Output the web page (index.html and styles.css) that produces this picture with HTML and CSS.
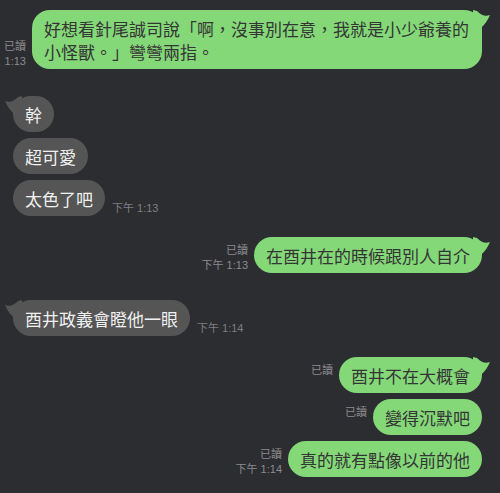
FILE: index.html
```html
<!DOCTYPE html>
<html lang="zh-Hant">
<head>
    <meta charset="UTF-8">
    <meta name="viewport" content="width=device-width, initial-scale=1.0">
    <title>聊天</title>
    <link rel="stylesheet" href="styles.css">
</head>
<body>
    <div class="chat">
        <div class="row out head">
            <div class="meta"><span>已讀</span><span>1:13</span></div>
            <div class="bubble">好想看針尾誠司說「啊，沒事別在意，我就是小少爺養的小怪獸。」彎彎兩指。<svg class="tail" viewBox="0 0 18 18"><path d="M1 5 C6 7 10 5 14 1 L18 0 L18 18 L10 18 C6 14 3 10 1 5 Z"/></svg></div>
        </div>

        <div class="row in head">
            <div class="bubble">幹<svg class="tail" viewBox="0 0 18 18"><path d="M1 5 C6 7 10 5 14 1 L18 0 L18 18 L10 18 C6 14 3 10 1 5 Z"/></svg></div>
        </div>
        <div class="row in">
            <div class="bubble">超可愛</div>
        </div>
        <div class="row in">
            <div class="bubble">太色了吧</div>
            <div class="time">下午 1:13</div>
        </div>

        <div class="row out head">
            <div class="meta"><span>已讀</span><span>下午 1:13</span></div>
            <div class="bubble">在酉井在的時候跟別人自介<svg class="tail" viewBox="0 0 18 18"><path d="M1 5 C6 7 10 5 14 1 L18 0 L18 18 L10 18 C6 14 3 10 1 5 Z"/></svg></div>
        </div>

        <div class="row in head">
            <div class="bubble">酉井政義會瞪他一眼<svg class="tail" viewBox="0 0 18 18"><path d="M1 5 C6 7 10 5 14 1 L18 0 L18 18 L10 18 C6 14 3 10 1 5 Z"/></svg></div>
            <div class="time">下午 1:14</div>
        </div>

        <div class="row out head">
            <div class="meta"><span>已讀</span></div>
            <div class="bubble">酉井不在大概會<svg class="tail" viewBox="0 0 18 18"><path d="M1 5 C6 7 10 5 14 1 L18 0 L18 18 L10 18 C6 14 3 10 1 5 Z"/></svg></div>
        </div>
        <div class="row out">
            <div class="meta"><span>已讀</span></div>
            <div class="bubble">變得沉默吧</div>
        </div>
        <div class="row out">
            <div class="meta"><span>已讀</span><span>下午 1:14</span></div>
            <div class="bubble">真的就有點像以前的他</div>
        </div>
    </div>
</body>
</html>
```

FILE: styles.css
```css
body {
    margin: 0;
    background-color: #2c2d30;
    font-family: "Noto Sans CJK TC", sans-serif;
}

.chat {
    display: flex;
    flex-direction: column;
    padding: 10px 18px 10px 4px;
}

.row {
    display: flex;
    align-items: flex-end;
    margin-top: 6px;
}

.row.in {
    justify-content: flex-start;
    padding-left: 9px;
}

.row.out {
    justify-content: flex-end;
}

.row.in.head {
    margin-top: 27px;
}

.row.out.head {
    margin-top: 21px;
}

.chat .row.head:first-child {
    margin-top: 0;
}

.bubble {
    position: relative;
    max-width: 450px;
    padding: 7px 12px 6px;
    border-radius: 18px;
    font-size: 17px;
    line-height: 23px;
    box-sizing: border-box;
}

.in .bubble {
    background-color: #555555;
    color: #f0f0f0;
}

.out .bubble {
    background-color: #84d878;
    color: #353535;
}

.tail {
    position: absolute;
    top: 0;
    width: 18px;
    height: 18px;
}

.in .tail {
    left: -9px;
    fill: #555555;
}

.out .tail {
    right: -9px;
    fill: #84d878;
    transform: scaleX(-1);
}

.meta {
    display: flex;
    flex-direction: column;
    align-items: flex-end;
    flex-shrink: 0;
    height: 30px;
    margin-right: 6px;
    font-family: "Liberation Sans", "Noto Sans CJK TC", sans-serif;
    font-size: 11px;
    line-height: 15px;
    color: #8a8b8e;
    white-space: nowrap;
}

.time {
    flex-shrink: 0;
    margin-left: 7px;
    font-family: "Liberation Sans", "Noto Sans CJK TC", sans-serif;
    font-size: 11px;
    line-height: 15px;
    color: #7d7e82;
    white-space: nowrap;
}
```
